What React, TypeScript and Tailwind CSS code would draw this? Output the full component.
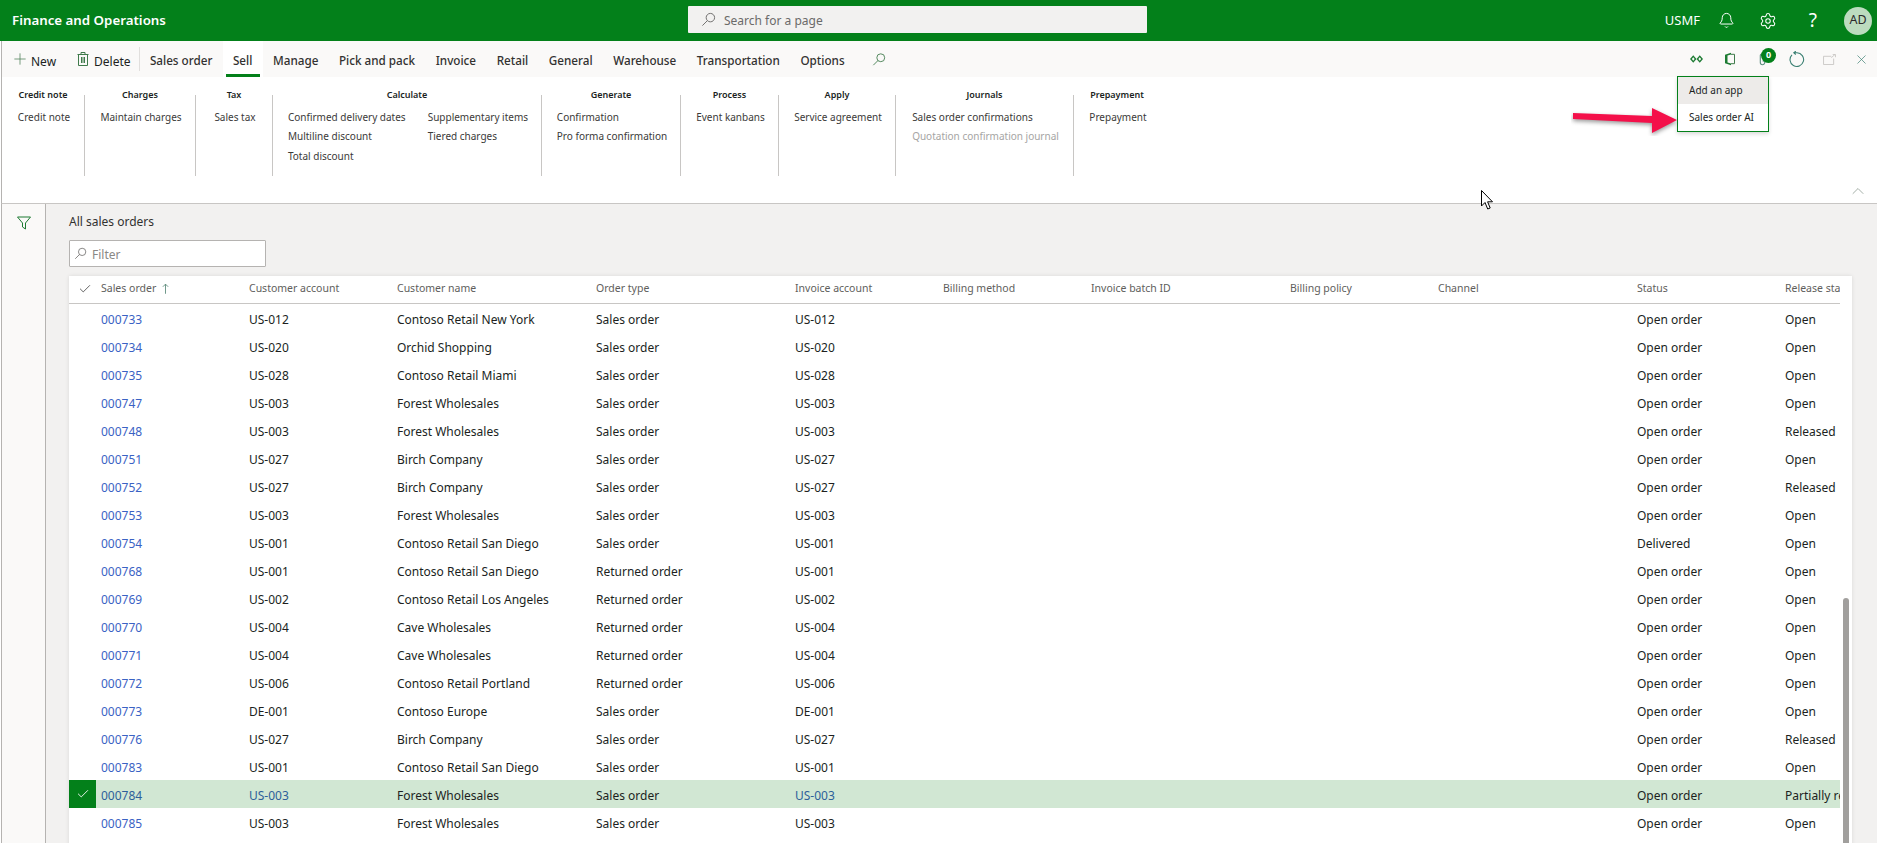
import React from 'react';
import { Bell, Check, ChevronUp, Plus, Settings, X } from 'lucide-react';

const green = 'bg-[#03801a]';
const cell = 'pt-[3px]';

const SearchIcon = ({ className }: { className: string }) => (
  <svg viewBox="0 0 16 16" fill="none" stroke="currentColor" strokeWidth="1" className={className}>
    <circle cx="10" cy="6" r="4.5" />
    <path d="M6.8 9.2 1.5 14.5" />
  </svg>
);

const tabs = ['Sales order', 'Sell', 'Manage', 'Pick and pack', 'Invoice', 'Retail', 'General', 'Warehouse', 'Transportation', 'Options'];

const groups = [
  { title: 'Credit note', width: 'w-[83px]', cols: [['Credit note']] },
  { title: 'Charges', width: 'w-[111px]', cols: [['Maintain charges']] },
  { title: 'Tax', width: 'w-[77px]', cols: [['Sales tax']] },
  { title: 'Calculate', width: 'w-[269px]', cols: [['Confirmed delivery dates', 'Multiline discount', 'Total discount'], ['Supplementary items', 'Tiered charges']] },
  { title: 'Generate', width: 'w-[139px]', cols: [['Confirmation', 'Pro forma confirmation']] },
  { title: 'Process', width: 'w-[98px]', cols: [['Event kanbans']] },
  { title: 'Apply', width: 'w-[117px]', cols: [['Service agreement']] },
  { title: 'Journals', width: 'w-[178px]', cols: [['Sales order confirmations', 'Quotation confirmation journal']] },
  { title: 'Prepayment', width: 'w-[86px] border-r-0', cols: [['Prepayment']] },
];

const columns = [
  { label: 'Customer account', width: 'w-[148px]' },
  { label: 'Customer name', width: 'w-[199px]' },
  { label: 'Order type', width: 'w-[199px]' },
  { label: 'Invoice account', width: 'w-[148px]' },
  { label: 'Billing method', width: 'w-[148px]' },
  { label: 'Invoice batch ID', width: 'w-[199px]' },
  { label: 'Billing policy', width: 'w-[148px]' },
  { label: 'Channel', width: 'w-[199px]' },
  { label: 'Status', width: 'w-[148px]' },
];

const orders = [
  ['000733', 'US-012', 'Contoso Retail New York', 'Sales order', 'Open order', 'Open'],
  ['000734', 'US-020', 'Orchid Shopping', 'Sales order', 'Open order', 'Open'],
  ['000735', 'US-028', 'Contoso Retail Miami', 'Sales order', 'Open order', 'Open'],
  ['000747', 'US-003', 'Forest Wholesales', 'Sales order', 'Open order', 'Open'],
  ['000748', 'US-003', 'Forest Wholesales', 'Sales order', 'Open order', 'Released'],
  ['000751', 'US-027', 'Birch Company', 'Sales order', 'Open order', 'Open'],
  ['000752', 'US-027', 'Birch Company', 'Sales order', 'Open order', 'Released'],
  ['000753', 'US-003', 'Forest Wholesales', 'Sales order', 'Open order', 'Open'],
  ['000754', 'US-001', 'Contoso Retail San Diego', 'Sales order', 'Delivered', 'Open'],
  ['000768', 'US-001', 'Contoso Retail San Diego', 'Returned order', 'Open order', 'Open'],
  ['000769', 'US-002', 'Contoso Retail Los Angeles', 'Returned order', 'Open order', 'Open'],
  ['000770', 'US-004', 'Cave Wholesales', 'Returned order', 'Open order', 'Open'],
  ['000771', 'US-004', 'Cave Wholesales', 'Returned order', 'Open order', 'Open'],
  ['000772', 'US-006', 'Contoso Retail Portland', 'Returned order', 'Open order', 'Open'],
  ['000773', 'DE-001', 'Contoso Europe', 'Sales order', 'Open order', 'Open'],
  ['000776', 'US-027', 'Birch Company', 'Sales order', 'Open order', 'Released'],
  ['000783', 'US-001', 'Contoso Retail San Diego', 'Sales order', 'Open order', 'Open'],
  ['000784', 'US-003', 'Forest Wholesales', 'Sales order', 'Open order', 'Partially released'],
  ['000785', 'US-003', 'Forest Wholesales', 'Sales order', 'Open order', 'Open'],
];

function TopBar() {
  return (
    <header className={`h-[41px] ${green} flex items-center text-white relative shrink-0`}>
      <span className="ml-3 text-[13.300px] font-semibold">Finance and Operations</span>
      <div className="absolute left-[688px] top-[6px] w-[459px] h-[27px] bg-[#f2f1f0] rounded-[1px] flex items-center pl-[13px] pt-[3px] text-[#6b6a69] text-[12px]">
        <SearchIcon className="w-[15px] h-[15px] mr-[8px] -mt-[3px]" />
        Search for a page
      </div>
      <div className="ml-auto flex items-center">
        <span className="text-[13px] w-[50px]">USMF</span>
        <Bell size={17} strokeWidth={1.4} className="ml-[3px]" />
        <Settings size={18} strokeWidth={1.4} className="ml-[24px]" />
        <span className="ml-[32px] text-[19px] leading-none">?</span>
        <span className="ml-[27px] mr-[5px] w-[28px] h-[28px] rounded-full bg-[#bcdcbf] text-[#2b2b2b] text-[12.500px] flex items-center justify-center">AD</span>
      </div>
    </header>
  );
}

function Toolbar() {
  return (
    <div className="h-[36px] bg-[#faf9f8] border-l border-[#b5b3b1] flex items-center text-[12px] text-[#201f1e] relative shrink-0 ml-px">
      <Plus size={18} strokeWidth={1} className="ml-[9px] text-[#4b7d55]" />
      <span className="ml-[2px] pt-[5px]">New</span>
      <svg viewBox="0 0 12 16" fill="none" stroke="#3f7a4b" strokeWidth="1" className="w-[12px] h-[16px] ml-[21px]">
        <path d="M1.5 3.500v11h9v-11M.5 3.500h11M4 3.500v-2h4v2M4.500 6v6M6 6v6M7.500 6v6" />
      </svg>
      <span className="ml-[5px] pt-[5px]">Delete</span>
      <div className="w-px h-[24px] bg-[#e1dfdd] ml-[8px]" />
      {tabs.map(tab => (
        <div key={tab} className={`h-full px-[10.300px] pt-[3px] flex items-center text-[11.700px] font-medium text-[#323130] relative ${tab === 'Sell' ? 'bg-white' : ''}`}>
          {tab}
          {tab === 'Sell' && <div className="absolute left-[3px] right-[3px] bottom-0 h-[3px] bg-[#03801a]" />}
        </div>
      ))}
      <SearchIcon className="w-[14px] h-[15px] ml-[17px] text-[#3f7a4b]" />
      <div className="absolute right-0 top-0 h-full flex items-center">
        <div className="w-[33px] flex justify-center">
          <svg viewBox="0 0 14 8" className="w-[13px] h-[8px]" fill="#1d7b33">
            <path d="M3.500 0 7 4 3.500 8 0 4zM3.500 2 2 4l1.500 2L5 4zM10.500 0 14 4l-3.500 4L7 4zM10.500 2 9 4l1.500 2L12 4z" />
          </svg>
        </div>
        <div className="w-[33px] flex justify-center">
          <svg viewBox="0 0 12 14" className="w-[12px] h-[14px]" fill="none">
            <path d="M7 .8 1 2.800v8.400l6 2z" fill="#1d7b33" />
            <path d="M3.500 3.600v6.800L7 11.500V2.500z" fill="#faf9f8" />
            <path d="M7 2.300h3.500v9.400H7" stroke="#3f7a4b" />
          </svg>
        </div>
        <div className="relative w-[34px] flex justify-center">
          <svg viewBox="0 0 8 15" fill="none" stroke="#5f8f80" strokeWidth="1.300" className="w-[7px] h-[15px] mr-[1px]">
            <path d="M6.500 4v7a2.500 2.500 0 0 1-5 0V3a1.700 1.700 0 0 1 3.400 0v7" />
          </svg>
          <span className="absolute left-[15px] top-[-4px] w-[15px] h-[15px] rounded-full bg-[#03801a] text-white text-[9px] font-bold flex items-center justify-center">0</span>
        </div>
        <div className="w-[33px] flex justify-center">
          <svg viewBox="0 0 16 16" fill="none" stroke="#3a7f72" strokeWidth="1.100" className="w-[16px] h-[16px]">
            <path d="M3 3.800A6.800 6.800 0 1 0 8 1.800H4.800M6.800.2 4.800 1.800l2 1.700" />
          </svg>
        </div>
        <div className="w-[33px] flex justify-center">
          <svg viewBox="0 0 14 12" fill="none" stroke="#c8c6c4" className="w-[13px] h-[11px]">
            <path d="M9 2.500H.5v9h11V5M9 4l4-3.500M10.500.5H13.500v3" />
          </svg>
        </div>
        <div className="w-[31px] flex justify-center"><X size={15} strokeWidth={1.100} className="text-[#3a7f72]" /></div>
      </div>
    </div>
  );
}

function Ribbon() {
  return (
    <div className="h-[127px] bg-white border-l border-[#b5b3b1] border-b-[#c8c6c4] border-b ml-px relative shrink-0 flex items-start pt-[18px] text-[10px] text-[#3b3a39]">
      {groups.map(group => (
        <div key={group.title} className={`${group.width} h-[81px] box-border border-r border-[#c8c6c4] shrink-0 flex flex-col items-center`}>
          <div className="text-[9px] leading-[15px] font-semibold text-[#201f1e] -mt-[8px] mb-[5.500px] whitespace-nowrap">{group.title}</div>
          <div className="flex gap-[22px] self-center ml-[2px]">
            {group.cols.map((items, i) => (
              <div key={i} className="flex flex-col">
                {items.map(item => (
                  <div key={item} className={`h-[19.500px] leading-[19px] whitespace-nowrap ${item.startsWith('Quotation') ? 'text-[#a6a5a4]' : ''}`}>{item}</div>
                ))}
              </div>
            ))}
          </div>
        </div>
      ))}
      <ChevronUp size={20} strokeWidth={1.200} className="absolute right-[9px] bottom-[2px] text-[#a5b0a8]" />
    </div>
  );
}

function Grid() {
  return (
    <div className="flex-1 bg-[#f2f1f0] pl-[23px] pr-[25px] min-w-0 overflow-hidden">
      <div className="h-[36px] pt-[10px] text-[12px] text-[#323130] leading-[16px]">All sales orders</div>
      <div className="w-[197px] h-[27px] bg-white border border-[#b5b3b1] rounded-[1px] flex items-center pl-[4px] pt-[2px] text-[12px] text-[#8a8886]">
        <SearchIcon className="w-[13px] h-[13px] mr-[5px] -mt-[2px] text-[#6f6e6d]" />
        Filter
      </div>
      <div className="mt-[9px] w-[1783px] bg-white shadow-[0_0_4px_rgba(0,0,0,0.1)] relative h-[600px] overflow-hidden">
        <div className="flex h-[28px] pb-[2px] border-b border-[#c8c6c4] w-[1771px] items-center text-[10.500px] text-[#605e5c] overflow-hidden">
          <div className="w-[32px] shrink-0 flex justify-center"><Check size={14} strokeWidth={1.300} className="text-[#333333]" /></div>
          <div className="w-[148px] shrink-0 flex items-center">
            Sales order
            <svg viewBox="0 0 8 12" fill="none" stroke="#5c8a7a" className="w-[7px] h-[11px] ml-[6px]"><path d="M4 12V1M1 4l3-3 3 3" /></svg>
          </div>
          {columns.map(col => <div key={col.label} className={`${col.width} shrink-0`}>{col.label}</div>)}
          <div className="flex-1 min-w-0 whitespace-nowrap overflow-hidden">Release status</div>
        </div>
        {orders.map(row => {
          const selected = row[0] === '000784';
          return (
            <div key={row[0]} className={`flex h-[28px] w-[1771px] items-center text-[12px] text-[#201f1e] overflow-hidden ${selected ? 'bg-[#d1e7d3]' : ''}`}>
              <div className={`w-[27px] h-full shrink-0 mr-[5px] flex items-center justify-center ${selected ? 'bg-[#03801a]' : ''}`}>
                {selected && <Check size={14} strokeWidth={1.500} className="text-white" />}
              </div>
              <div className={`w-[148px] shrink-0 ${cell} ${selected ? 'text-[#2d5f9a]' : 'text-[#3a62c4]'}`}>{row[0]}</div>
              <div className={`w-[148px] shrink-0 ${cell} ${selected ? 'text-[#2d5f9a]' : ''}`}>{row[1]}</div>
              <div className={`w-[199px] shrink-0 ${cell}`}>{row[2]}</div>
              <div className={`w-[199px] shrink-0 ${cell}`}>{row[3]}</div>
              <div className={`w-[148px] shrink-0 ${cell} ${selected ? 'text-[#2d5f9a]' : ''}`}>{row[1]}</div>
              <div className="w-[148px] shrink-0" />
              <div className="w-[199px] shrink-0" />
              <div className="w-[148px] shrink-0" />
              <div className="w-[199px] shrink-0" />
              <div className={`w-[148px] shrink-0 ${cell}`}>{row[4]}</div>
              <div className={`flex-1 min-w-0 whitespace-nowrap overflow-hidden ${cell}`}>{row[5]}</div>
            </div>
          );
        })}
        <div className="absolute right-[3px] top-[322px] bottom-0 w-[6px] bg-[#a19f9d] rounded-t-[3px]" />
      </div>
    </div>
  );
}

export default function App() {
  return (
    <div className="w-[1877px] h-[843px] overflow-hidden flex flex-col bg-white relative" style={{ fontFamily: '"Noto Sans", sans-serif' }}>
      <TopBar />
      <Toolbar />
      <Ribbon />
      <div className="flex flex-1 min-h-0 ml-px border-l border-[#b5b3b1]">
        <div className="w-[44px] bg-[#faf9f8] border-r border-[#b5b3b1] shrink-0 flex justify-center pt-[12px]">
          <svg viewBox="0 0 14 14" fill="none" stroke="#1d7b33" className="w-[14px] h-[14px]"><path d="M.5 1h13L8.500 7v6l-3-2V7z" /></svg>
        </div>
        <Grid />
      </div>
      <div className="absolute left-[1677px] top-[76px] w-[92px] h-[56px] bg-white border border-[#03801a] shadow-[0_2px_4px_rgba(0,0,0,0.15)] text-[10px] text-[#201f1e]">
        <div className="h-[27px] bg-[#edebe9] pl-[11px] flex items-center">Add an app</div>
        <div className="h-[27px] pl-[11px] flex items-center">Sales order AI</div>
      </div>
      <svg viewBox="0 0 110 30" className="absolute left-[1571px] top-[106px] w-[110px] h-[30px]">
        <path d="M2 7 81 10 81 2 106 14 81 27 81 17 2 13z" fill="#f4104a" style={{ filter: 'drop-shadow(0 2px 2px rgba(0,0,0,0.4))' }} />
      </svg>
      <svg viewBox="0 0 13 21" className="absolute left-[1481px] top-[190px] w-[13px] h-[21px]">
        <path d="M.5.500V16l3.500-3.500 2.700 6.500 2.500-1-2.600-6.200H11.500z" fill="white" stroke="black" strokeWidth="1" />
      </svg>
    </div>
  );
}
